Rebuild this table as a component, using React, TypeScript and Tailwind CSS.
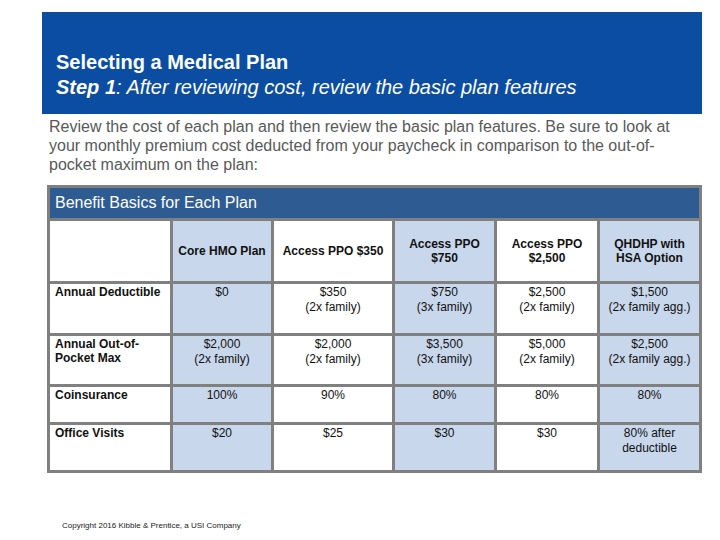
import React from 'react';

type Cell = { top: string; sub?: string };

const PLANS = [
  { name: ['Core HMO Plan'], shaded: true },
  { name: ['Access PPO $350'], shaded: false },
  { name: ['Access PPO', '$750'], shaded: true },
  { name: ['Access PPO', '$2,500'], shaded: false },
  { name: ['QHDHP with', 'HSA Option'], shaded: true },
];

const ROWS: { label: string[]; values: Cell[] }[] = [
  {
    label: ['Annual Deductible'],
    values: [
      { top: '$0' },
      { top: '$350', sub: '(2x family)' },
      { top: '$750', sub: '(3x family)' },
      { top: '$2,500', sub: '(2x family)' },
      { top: '$1,500', sub: '(2x family agg.)' },
    ],
  },
  {
    label: ['Annual Out-of-', 'Pocket Max'],
    values: [
      { top: '$2,000', sub: '(2x family)' },
      { top: '$2,000', sub: '(2x family)' },
      { top: '$3,500', sub: '(3x family)' },
      { top: '$5,000', sub: '(2x family)' },
      { top: '$2,500', sub: '(2x family agg.)' },
    ],
  },
  {
    label: ['Coinsurance'],
    values: [{ top: '100%' }, { top: '90%' }, { top: '80%' }, { top: '80%' }, { top: '80%' }],
  },
  {
    label: ['Office Visits'],
    values: [{ top: '$20' }, { top: '$25' }, { top: '$30' }, { top: '$30' }, { top: '80% after', sub: 'deductible' }],
  },
];

export default function App() {
  return (
    <div className="relative h-[540px] w-[720px] overflow-hidden bg-white pt-[12px] font-['Liberation_Sans',Arial,sans-serif]">
      {/* Banner */}
      <div className="ml-[42px] h-[102px] w-[660px] bg-[#0a4da2] pl-[14px] pt-[38px] text-[20px] leading-[25px] text-white">
        <p className="font-bold">Selecting a Medical Plan</p>
        <p className="italic">
          <span className="font-bold">Step 1</span>: After reviewing cost, review the basic plan features
        </p>
      </div>

      {/* Intro */}
      <p className="ml-[49px] mt-[3px] w-[640px] text-[16px] leading-[19px] text-[#595959]">
        Review the cost of each plan and then review the basic plan features. Be sure to look at your monthly premium cost deducted from your paycheck in comparison to the out-of-pocket maximum on the plan:
      </p>

      {/* Table */}
      <div className="ml-[47px] mt-[11px] grid w-[655px] grid-cols-[120px_98px_118px_99px_100px_99px] grid-rows-[30px_60px_49px_48px_35px_45px] gap-[3px] bg-[#808080] p-[3px] text-[12px] leading-[14.5px] text-[#111]">
        <div className="col-span-6 flex items-center bg-[#2f5b93] pl-[5px] text-[16px] text-white">
          Benefit Basics for Each Plan
        </div>

        <div className="bg-white" />
        {PLANS.map((p) => (
          <div
            key={p.name.join(' ')}
            className={`flex flex-col items-center justify-center text-center font-bold leading-[14px] ${p.shaded ? 'bg-[#c8d7eb]' : 'bg-white'}`}
          >
            {p.name.map((n) => (
              <span key={n}>{n}</span>
            ))}
          </div>
        ))}

        {ROWS.map((row) => (
          <React.Fragment key={row.label.join(' ')}>
            <div className="bg-white pl-[5px] pt-[1px] font-bold leading-[14px]">
              {row.label.map((l) => (
                <div key={l}>{l}</div>
              ))}
            </div>
            {row.values.map((v, i) => (
              <div
                key={i}
                className={`pt-[1px] text-center ${PLANS[i].shaded ? 'bg-[#c8d7eb]' : 'bg-white'}`}
              >
                <div>{v.top}</div>
                {v.sub && <div>{v.sub}</div>}
              </div>
            ))}
          </React.Fragment>
        ))}
      </div>

      <p className="ml-[62px] mt-[48px] text-[8px] leading-[10px] text-[#222]">
        Copyright 2016 Kibble &amp; Prentice, a USI Company
      </p>
    </div>
  );
}
